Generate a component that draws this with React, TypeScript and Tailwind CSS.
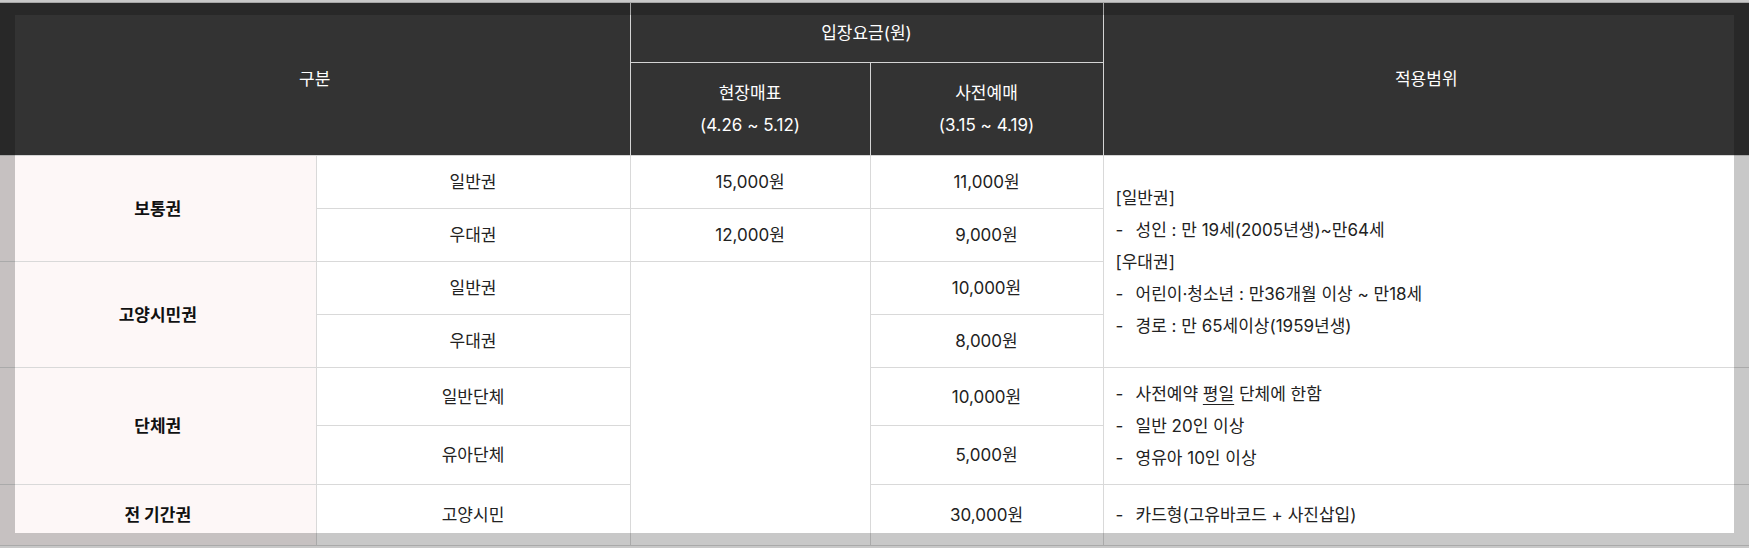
import React from "react";

const font = { fontFamily: 'Inter, "Noto Sans CJK KR", sans-serif' };

function Item({ children }: { children: React.ReactNode }) {
  return (
    <div className="flex">
      <span className="w-[20px] shrink-0">-</span>
      <span>{children}</span>
    </div>
  );
}

const th = "bg-[#333333] text-white font-normal text-center align-middle border border-[#d4d4d4]";
const td = "border border-[#d9d9d9] text-center align-middle text-[#222]";
const tdHead = "border border-[#d9d9d9] text-center align-middle bg-[#fdf7f7] font-bold text-[#111]";
const tdList = "border border-[#d9d9d9] text-left align-middle text-[#222] pl-[12px] py-[10px]";

export default function App() {
  return (
    <div className="relative w-full h-[548px] overflow-hidden bg-white" style={font}>
      <table className="mt-[2px] w-[1749px] border-collapse table-fixed text-[17px] leading-[32px]">
        <colgroup>
          <col className="w-[316px]" />
          <col className="w-[314px]" />
          <col className="w-[240px]" />
          <col className="w-[233px]" />
          <col className="w-[646px]" />
        </colgroup>
        <thead>
          <tr className="h-[60px]">
            <th colSpan={2} rowSpan={2} className={`${th} border-l-0`}>
              구분
            </th>
            <th colSpan={2} className={th}>
              입장요금(원)
            </th>
            <th rowSpan={2} className={`${th} border-r-0`}>
              적용범위
            </th>
          </tr>
          <tr className="h-[93px]">
            <th className={th}>
              현장매표
              <br />
              (4.26 ~ 5.12)
            </th>
            <th className={th}>
              사전예매
              <br />
              (3.15 ~ 4.19)
            </th>
          </tr>
        </thead>
        <tbody>
          <tr className="h-[53px]">
            <td rowSpan={2} className={`${tdHead} border-l-0`}>
              보통권
            </td>
            <td className={td}>일반권</td>
            <td className={td}>15,000원</td>
            <td className={td}>11,000원</td>
            <td rowSpan={4} className={`${tdList} border-r-0`}>
              <div>[일반권]</div>
              <Item>성인 : 만 19세(2005년생)~만64세</Item>
              <div>[우대권]</div>
              <Item>어린이·청소년 : 만36개월 이상 ~ 만18세</Item>
              <Item>경로 : 만 65세이상(1959년생)</Item>
            </td>
          </tr>
          <tr className="h-[53px]">
            <td className={td}>우대권</td>
            <td className={td}>12,000원</td>
            <td className={td}>9,000원</td>
          </tr>
          <tr className="h-[53px]">
            <td rowSpan={2} className={`${tdHead} border-l-0`}>
              고양시민권
            </td>
            <td className={td}>일반권</td>
            <td rowSpan={5} className={td}></td>
            <td className={td}>10,000원</td>
          </tr>
          <tr className="h-[53px]">
            <td className={td}>우대권</td>
            <td className={td}>8,000원</td>
          </tr>
          <tr className="h-[58px]">
            <td rowSpan={2} className={`${tdHead} border-l-0`}>
              단체권
            </td>
            <td className={td}>일반단체</td>
            <td className={td}>10,000원</td>
            <td rowSpan={2} className={`${tdList} border-r-0`}>
              <Item>
                사전예약 <span className="underline underline-offset-4">평일</span> 단체에 한함
              </Item>
              <Item>일반 20인 이상</Item>
              <Item>영유아 10인 이상</Item>
            </td>
          </tr>
          <tr className="h-[59px]">
            <td className={td}>유아단체</td>
            <td className={td}>5,000원</td>
          </tr>
          <tr className="h-[61px]">
            <td className={`${tdHead} border-l-0`}>전 기간권</td>
            <td className={td}>고양시민</td>
            <td className={td}>30,000원</td>
            <td className={`${tdList} border-r-0`}>
              <Item>카드형(고유바코드 + 사진삽입)</Item>
            </td>
          </tr>
        </tbody>
      </table>
      <div className="pointer-events-none absolute inset-[15px] shadow-[0_0_0_2000px_rgba(0,0,0,0.216)]" />
    </div>
  );
}
